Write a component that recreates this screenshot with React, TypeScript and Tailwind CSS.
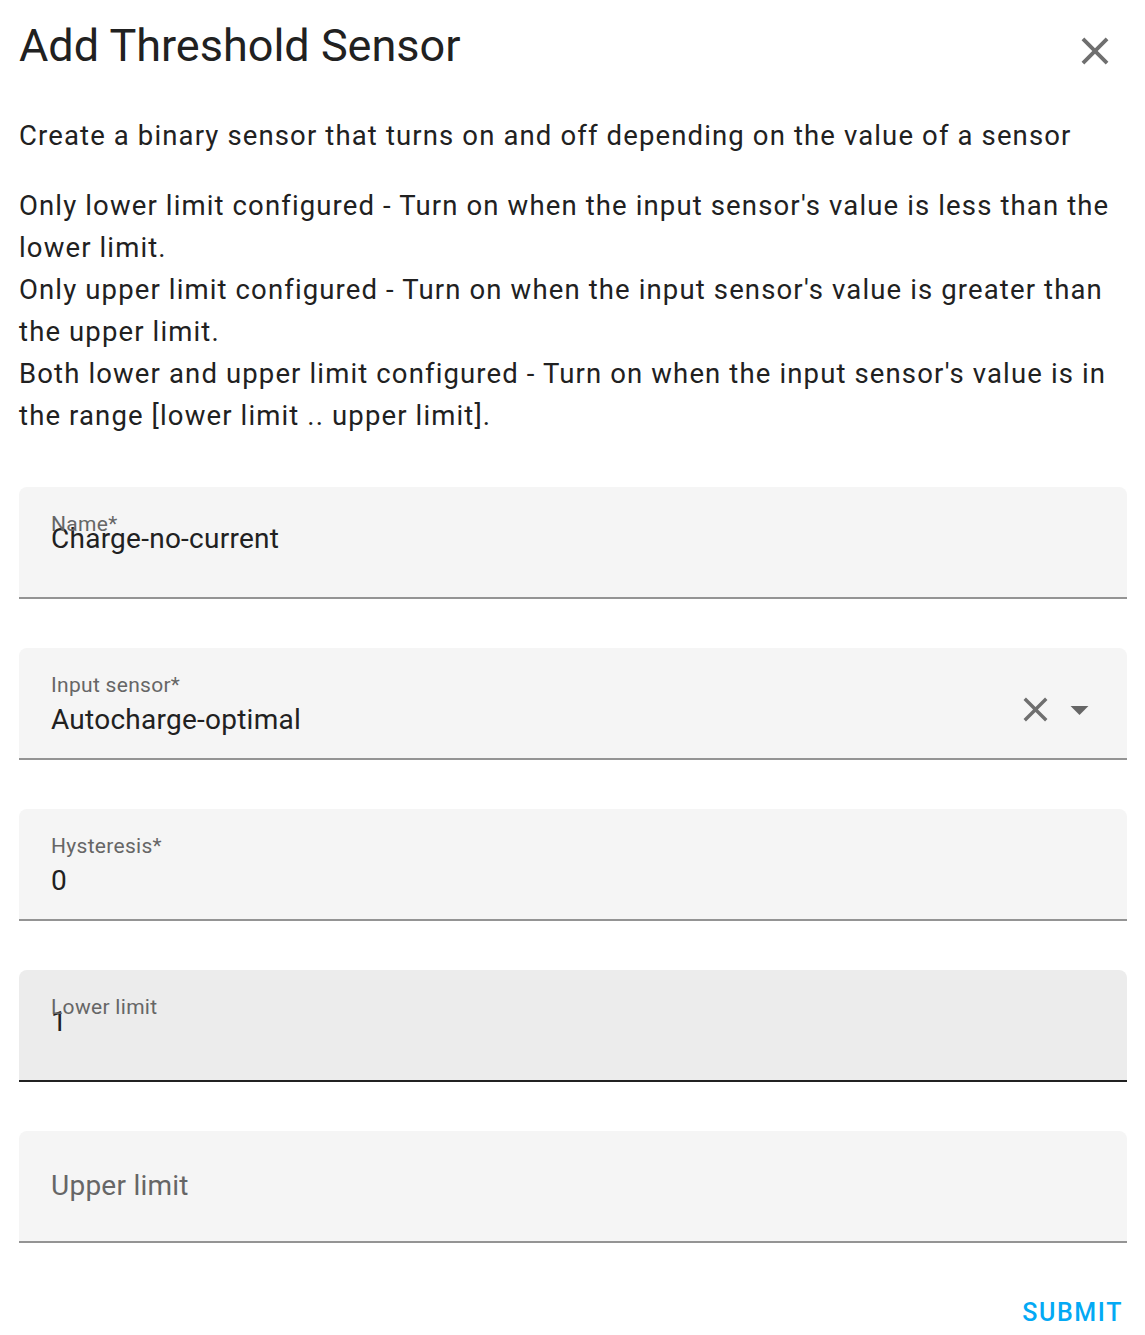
import React from 'react';

const font = { fontFamily: 'Roboto, "Noto Sans", sans-serif' };

// mdi close glyph
function CloseIcon({ className }: { className?: string }) {
  return (
    <svg viewBox="0 0 24 24" className={className} fill="currentColor">
      <path d="M19,6.41L17.59,5L12,10.59L6.41,5L5,6.41L10.59,12L5,17.59L6.41,19L12,13.41L17.59,19L19,17.59L13.41,12L19,6.41Z" />
    </svg>
  );
}

function MenuDown({ className }: { className?: string }) {
  return (
    <svg viewBox="0 0 24 24" className={className} fill="currentColor">
      <path d="M7,10L12,15L17,10H7Z" />
    </svg>
  );
}

type FieldProps = {
  label: string;
  value?: string;
  overlap?: boolean;
  hovered?: boolean;
  trailing?: React.ReactNode;
};

function Field({ label, value, overlap, hovered, trailing }: FieldProps) {
  const shell = hovered
    ? 'bg-[#ececec] border-[#212121]'
    : 'bg-[#f5f5f5] border-[#949494]';

  // empty field: label sits as a placeholder in the middle
  if (!value) {
    return (
      <div className={`h-[112px] rounded-t-[8px] border-b-2 ${shell} flex items-center px-[32px]`}>
        <span className="text-[28px] tracking-[0.25px] text-[#666666]">{label}</span>
      </div>
    );
  }

  return (
    <div className={`relative h-[112px] rounded-t-[8px] border-b-2 ${shell} flex items-start pl-[32px] pr-[26px]`}>
      <span className="absolute left-[32px] top-[24px] text-[21px] leading-[26px] tracking-[0.3px] text-[#666666]">
        {label}
      </span>
      <span
        className={`flex-1 text-[28px] leading-[36px] tracking-[0.25px] text-[#212121] ${
          overlap ? 'pt-[34px]' : 'pt-[54px]'
        }`}
      >
        {value}
      </span>
      {trailing}
    </div>
  );
}

export default function App() {
  return (
    <div className="min-h-[1335px] bg-white pl-[19px] pr-[18px] pt-[18px]" style={font}>
      {/* ── Header ───────────────────────────────────────── */}
      <div className="flex items-start justify-between">
        <h1 className="text-[45px] leading-[56px] font-normal text-[#212121]">Add Threshold Sensor</h1>
        <button className="w-[46px] h-[46px] mt-[10px] mr-[9px] text-[#6f6f6f]">
          <CloseIcon className="w-[46px] h-[46px]" />
        </button>
      </div>

      {/* ── Description ──────────────────────────────────── */}
      <div className="mt-[41px] text-[27.5px] leading-[42px] tracking-[1.13px] text-[#212121]">
        <p>Create a binary sensor that turns on and off depending on the value of a sensor</p>
        <p className="mt-[28px]">
          Only lower limit configured - Turn on when the input sensor's value is less than the lower limit.
          <br />
          Only upper limit configured - Turn on when the input sensor's value is greater than the upper limit.
          <br />
          Both lower and upper limit configured - Turn on when the input sensor's value is in the range [lower
          limit .. upper limit].
        </p>
      </div>

      {/* ── Form ─────────────────────────────────────────── */}
      <div className="mt-[50px] flex flex-col gap-[49px]">
        <Field label="Name*" value="Charge-no-current" overlap />
        <Field
          label="Input sensor*"
          value="Autocharge-optimal"
          trailing={
            <div className="flex items-center self-center text-[#6f6f6f] gap-[2px] pt-[12px]">
              <CloseIcon className="w-[41px] h-[41px]" />
              <MenuDown className="w-[43px] h-[43px] text-[#666666]" />
            </div>
          }
        />
        <Field label="Hysteresis*" value="0" />
        <Field label="Lower limit" value="1" overlap hovered />
        <Field label="Upper limit" />
      </div>

      {/* ── Actions ──────────────────────────────────────── */}
      <div className="mt-[34px] h-[72px] flex items-center justify-end pr-[4px]">
        <button className="text-[25px] font-medium tracking-[1.6px] text-[#03a9f4]">SUBMIT</button>
      </div>
    </div>
  );
}
